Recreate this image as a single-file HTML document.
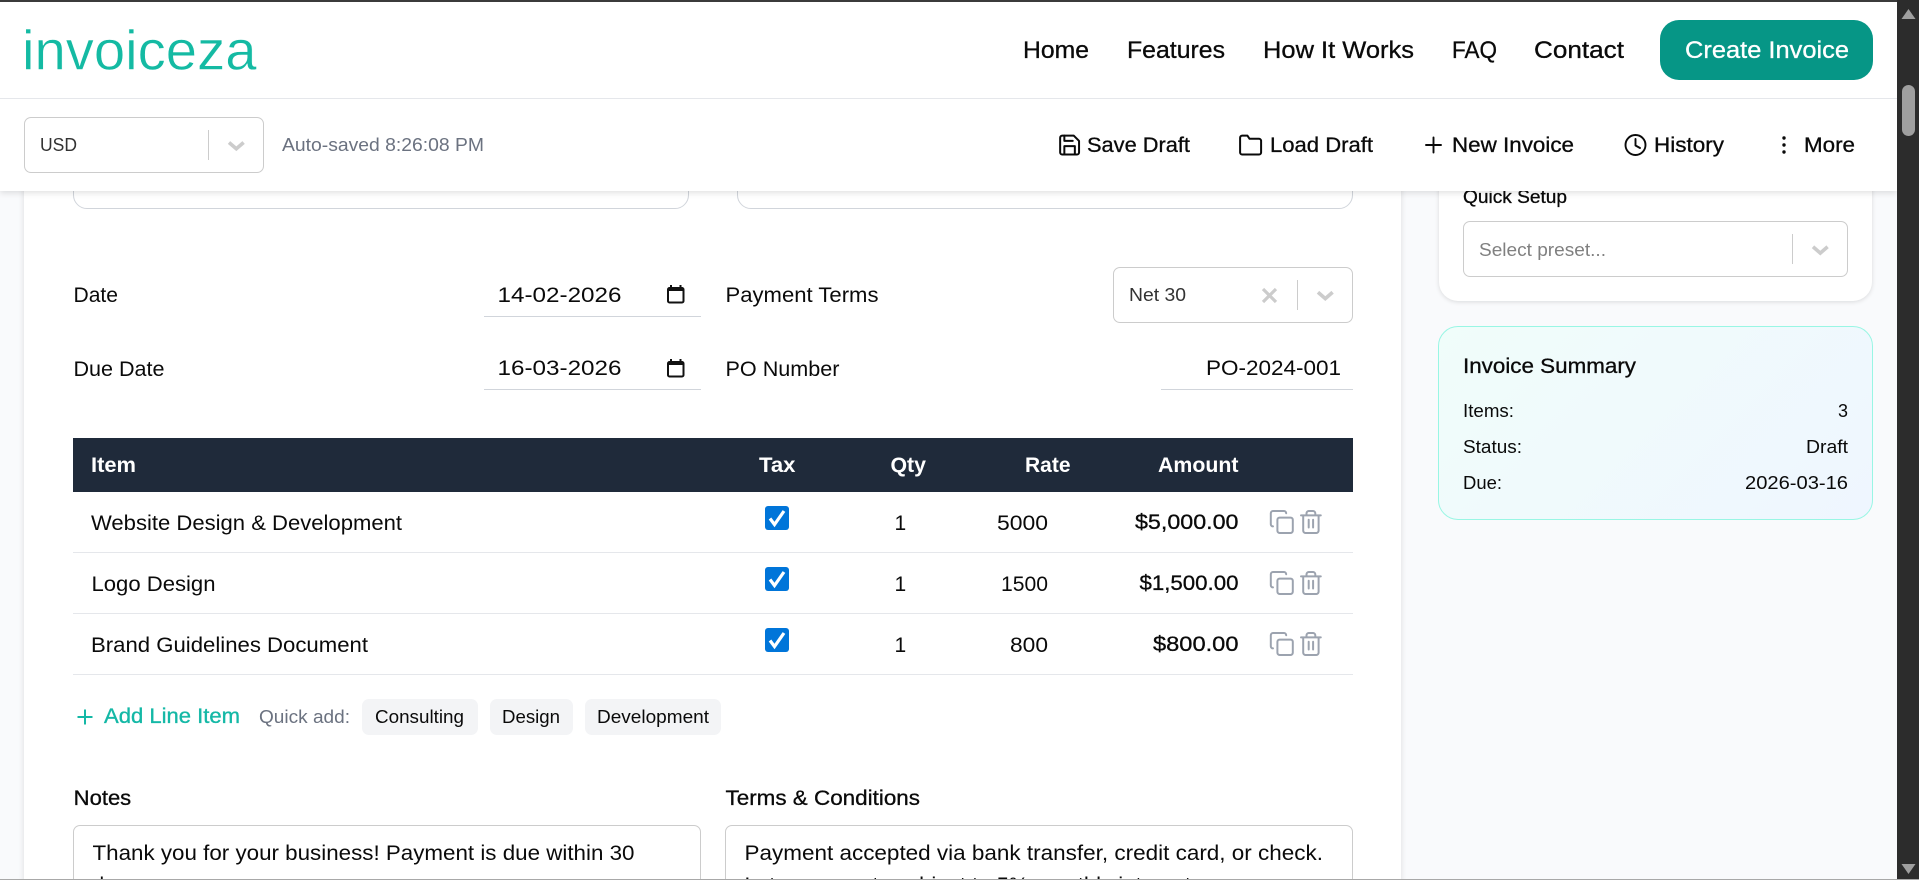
<!DOCTYPE html>
<html lang="en">
<head>
<meta charset="utf-8">
<title>invoiceza</title>
<style>
html,body{margin:0;padding:0;width:1919px;height:880px;overflow:hidden;background:#f9fafc}
body{position:relative;font-family:"Liberation Sans",sans-serif}
.a{position:absolute;box-sizing:border-box}
svg{position:absolute;left:0;top:0;overflow:visible}
text{font-family:"Liberation Sans",sans-serif;fill:#0a0a0a}
.l{font-size:21px}
.s{font-size:18.4px}
.m{stroke:#0a0a0a;stroke-width:.3px}
.b{font-weight:700}
.w{fill:#fff}
.sel{fill:#333}
.g{fill:#6b7280}
.ic{fill:none;stroke:#0a0a0a;stroke-width:1.9;stroke-linecap:round;stroke-linejoin:round}
.ca{fill:none;stroke:#ccc;stroke-width:3.600}
.act{fill:none;stroke:#9ca3af;stroke-width:1.8;stroke-linecap:round;stroke-linejoin:round}
.box{background:#fff;border:1px solid #ccc;border-radius:7px}
.inbox{background:#fff;border:1px solid #d1d5db}
</style>
</head>
<body>
<!-- content -->
<div class="a" style="left:24px;top:100px;width:1377px;height:800px;background:#fff;box-shadow:0 0 6px rgba(0,0,0,.12)"></div>
<div class="a inbox" style="left:73px;top:120px;width:616px;height:89px;border-radius:14px"></div>
<div class="a inbox" style="left:737px;top:120px;width:616px;height:89px;border-radius:14px"></div>
<div class="a box" style="left:1113px;top:267px;width:240px;height:56px"></div>
<div class="a" style="left:73px;top:438px;width:1280px;height:54px;background:#1f2a3a"></div>
<div class="a" style="left:73px;top:552px;width:1280px;height:1px;background:#e5e7eb"></div>
<div class="a" style="left:73px;top:613px;width:1280px;height:1px;background:#e5e7eb"></div>
<div class="a" style="left:73px;top:674px;width:1280px;height:1px;background:#e5e7eb"></div>
<div class="a" style="left:362px;top:699px;width:116px;height:36px;background:#f3f4f6;border-radius:7px"></div>
<div class="a" style="left:490px;top:699px;width:83px;height:36px;background:#f3f4f6;border-radius:7px"></div>
<div class="a" style="left:585px;top:699px;width:136px;height:36px;background:#f3f4f6;border-radius:7px"></div>
<div class="a inbox" style="left:73px;top:825px;width:628px;height:90px;border-color:#ccc;border-radius:7px"></div>
<div class="a inbox" style="left:725px;top:825px;width:628px;height:90px;border-color:#ccc;border-radius:7px"></div>
<!-- sidebar -->
<div class="a" style="left:1439px;top:100px;width:433px;height:201px;background:#fff;border-radius:19px;box-shadow:0 1px 5px rgba(0,0,0,.13)"></div>
<div class="a box" style="left:1463px;top:221px;width:385px;height:56px"></div>
<div class="a" style="left:1438px;top:326px;width:435px;height:194px;border-radius:20px;border:1px solid #99f6e4;background:linear-gradient(135deg,#f0fdfa,#eff6ff)"></div>

<svg width="1919" height="880" viewBox="0 0 1919 880">
  <!-- Quick setup -->
  <text class="s m" x="1463" y="203" textLength="104" lengthAdjust="spacingAndGlyphs">Quick Setup</text>
  <text class="s" style="fill:#808080" x="1479" y="256" textLength="127" lengthAdjust="spacingAndGlyphs">Select preset...</text>
  <rect x="1792" y="234" width="1" height="30" fill="#ccc"/>
  <path class="ca" d="M1813 246.800l7.300 6.300 7.300-6.300"/>
  <!-- Summary -->
  <text class="l m" x="1463" y="373" textLength="173" lengthAdjust="spacingAndGlyphs">Invoice Summary</text>
  <text class="s" x="1463" y="417" textLength="51" lengthAdjust="spacingAndGlyphs">Items:</text>
  <text class="s" x="1463" y="453" textLength="59" lengthAdjust="spacingAndGlyphs">Status:</text>
  <text class="s" x="1463" y="489" textLength="39" lengthAdjust="spacingAndGlyphs">Due:</text>
  <text class="s" x="1838" y="417" textLength="10" lengthAdjust="spacingAndGlyphs">3</text>
  <text class="s" x="1806" y="453" textLength="42" lengthAdjust="spacingAndGlyphs">Draft</text>
  <text class="s" x="1745" y="489" textLength="103" lengthAdjust="spacingAndGlyphs">2026-03-16</text>
  <!-- Form fields -->
  <text class="l" x="73.500" y="302" textLength="44.500" lengthAdjust="spacingAndGlyphs">Date</text>
  <text class="l" x="73.500" y="376" textLength="91" lengthAdjust="spacingAndGlyphs">Due Date</text>
  <text class="l" x="497.500" y="302" textLength="124" lengthAdjust="spacingAndGlyphs">14-02-2026</text>
  <text class="l" x="497.500" y="375" textLength="124" lengthAdjust="spacingAndGlyphs">16-03-2026</text>
  <rect x="484" y="316" width="217" height="1" fill="#d1d5db"/>
  <rect x="484" y="389" width="217" height="1" fill="#d1d5db"/>
  <g id="cal">
    <rect x="668" y="288" width="15.500" height="14.500" rx="1.500" fill="none" stroke="#111" stroke-width="2"/>
    <rect x="668" y="288" width="15.500" height="3" fill="#111"/>
    <rect x="670" y="285" width="2" height="3.500" fill="#111"/>
    <rect x="679.500" y="285" width="2" height="3.500" fill="#111"/>
  </g>
  <use href="#cal" y="74"/>
  <text class="l" x="725.500" y="302" textLength="153" lengthAdjust="spacingAndGlyphs">Payment Terms</text>
  <text class="l" x="725.500" y="376" textLength="114" lengthAdjust="spacingAndGlyphs">PO Number</text>
  <text class="s sel" x="1129" y="301" textLength="57" lengthAdjust="spacingAndGlyphs">Net 30</text>
  <path class="ca" style="stroke-width:3.200" d="M1263 289l13 13M1276 289l-13 13"/>
  <rect x="1297" y="280" width="1" height="30" fill="#ccc"/>
  <path class="ca" d="M1318 292.300l7.300 6.300 7.300-6.300"/>
  <text class="l" x="1206" y="375" textLength="135" lengthAdjust="spacingAndGlyphs">PO-2024-001</text>
  <rect x="1161" y="389" width="192" height="1" fill="#d1d5db"/>
  <!-- Table head -->
  <text class="l b w" x="91" y="472" textLength="45" lengthAdjust="spacingAndGlyphs">Item</text>
  <text class="l b w" x="759" y="472" textLength="36.500" lengthAdjust="spacingAndGlyphs">Tax</text>
  <text class="l b w" x="890.500" y="472" textLength="35.500" lengthAdjust="spacingAndGlyphs">Qty</text>
  <text class="l b w" x="1025" y="472" textLength="45.500" lengthAdjust="spacingAndGlyphs">Rate</text>
  <text class="l b w" x="1158" y="472" textLength="80.500" lengthAdjust="spacingAndGlyphs">Amount</text>
  <!-- Rows -->
  <text class="l" x="91" y="530" textLength="311" lengthAdjust="spacingAndGlyphs">Website Design &amp; Development</text>
  <text class="l" x="91.500" y="591" textLength="124" lengthAdjust="spacingAndGlyphs">Logo Design</text>
  <text class="l" x="91" y="652" textLength="277" lengthAdjust="spacingAndGlyphs">Brand Guidelines Document</text>
  <g id="chk">
    <rect x="765" y="506" width="24" height="24" rx="3" fill="#0075d9"/>
    <path d="M770 518.500l4.500 6 9.500-13.500" fill="none" stroke="#fff" stroke-width="3.200"/>
  </g>
  <use href="#chk" y="61"/>
  <use href="#chk" y="122"/>
  <text class="l" x="894.500" y="530">1</text>
  <text class="l" x="894.500" y="591">1</text>
  <text class="l" x="894.500" y="652">1</text>
  <text class="l" x="997" y="530" textLength="51" lengthAdjust="spacingAndGlyphs">5000</text>
  <text class="l" x="1001" y="591" textLength="47" lengthAdjust="spacingAndGlyphs">1500</text>
  <text class="l" x="1010" y="652" textLength="38" lengthAdjust="spacingAndGlyphs">800</text>
  <text class="l m" x="1135" y="529" textLength="103.500" lengthAdjust="spacingAndGlyphs">$5,000.00</text>
  <text class="l m" x="1139.500" y="590" textLength="99" lengthAdjust="spacingAndGlyphs">$1,500.00</text>
  <text class="l m" x="1153" y="651" textLength="85.500" lengthAdjust="spacingAndGlyphs">$800.00</text>
  <g id="acts">
    <g transform="translate(1268.600 508.800) scale(1.100)" class="act">
      <rect x="8" y="8" width="14" height="14" rx="2"/>
      <path d="M4 16c-1.100 0-2-.9-2-2V4c0-1.100.9-2 2-2h10c1.100 0 2 .9 2 2"/>
    </g>
    <g transform="translate(1297.700 508.800) scale(1.100)" class="act">
      <path d="M3 6h18M19 6v14c0 1-1 2-2 2H7c-1 0-2-1-2-2V6M8 6V4c0-1 1-2 2-2h4c1 0 2 1 2 2v2M10 10v7M14 10v7"/>
    </g>
  </g>
  <use href="#acts" y="61"/>
  <use href="#acts" y="122"/>
  <!-- Add line -->
  <path d="M85 709.500v15M77.500 717h15" stroke="#14b8a6" stroke-width="2" fill="none"/>
  <text class="l" style="fill:#14b8a6;stroke:#14b8a6;stroke-width:.35px" x="104" y="723" textLength="136" lengthAdjust="spacingAndGlyphs">Add Line Item</text>
  <text class="s g" x="259" y="723" textLength="91" lengthAdjust="spacingAndGlyphs">Quick add:</text>
  <text class="s" x="375" y="723" textLength="89" lengthAdjust="spacingAndGlyphs">Consulting</text>
  <text class="s" x="502" y="723" textLength="58" lengthAdjust="spacingAndGlyphs">Design</text>
  <text class="s" x="597" y="723" textLength="112" lengthAdjust="spacingAndGlyphs">Development</text>
  <!-- Notes -->
  <text class="l m" x="73.700" y="805" textLength="57.500" lengthAdjust="spacingAndGlyphs">Notes</text>
  <text class="l m" x="725.500" y="805" textLength="194.500" lengthAdjust="spacingAndGlyphs">Terms &amp; Conditions</text>
  <text class="l" x="92.500" y="860" textLength="542" lengthAdjust="spacingAndGlyphs">Thank you for your business! Payment is due within 30</text>
  <text class="l" x="92.500" y="892" textLength="50" lengthAdjust="spacingAndGlyphs">days.</text>
  <text class="l" x="744.500" y="860" textLength="578.500" lengthAdjust="spacingAndGlyphs">Payment accepted via bank transfer, credit card, or check.</text>
  <text class="l" x="744.500" y="892" textLength="452.500" lengthAdjust="spacingAndGlyphs">Late payments subject to 5% monthly interest.</text>
</svg>

<!-- sticky header -->
<div class="a" style="left:0;top:2px;width:1897px;height:189px;background:#fff;box-shadow:0 2px 6px rgba(0,0,0,.12)"></div>
<div class="a" style="left:0;top:98px;width:1897px;height:1px;background:#e5e7eb"></div>
<div class="a" style="left:1660px;top:20px;width:213px;height:60px;background:#069686;border-radius:19px"></div>
<div class="a box" style="left:24px;top:117px;width:239.500px;height:56px"></div>
<svg width="1919" height="880" viewBox="0 0 1919 880">
  <text style="font-size:56px;fill:#14baa3;stroke:#fff;stroke-width:.5px" x="22" y="69.500" textLength="234.500" lengthAdjust="spacingAndGlyphs">invoiceza</text>
  <g style="font-size:23.600px">
    <text class="m" x="1023" y="58" textLength="66" lengthAdjust="spacingAndGlyphs">Home</text>
    <text class="m" x="1127" y="58" textLength="98" lengthAdjust="spacingAndGlyphs">Features</text>
    <text class="m" x="1263" y="58" textLength="151" lengthAdjust="spacingAndGlyphs">How It Works</text>
    <text class="m" x="1452" y="58" textLength="45" lengthAdjust="spacingAndGlyphs">FAQ</text>
    <text class="m" x="1534" y="58" textLength="90" lengthAdjust="spacingAndGlyphs">Contact</text>
    <text class="w" style="stroke:#fff;stroke-width:.3px" x="1685" y="58" textLength="164" lengthAdjust="spacingAndGlyphs">Create Invoice</text>
  </g>
  <!-- toolbar left -->
  <text class="s sel" x="40" y="151" textLength="37" lengthAdjust="spacingAndGlyphs">USD</text>
  <rect x="208" y="130" width="1" height="30" fill="#ccc"/>
  <path class="ca" d="M229 142.500l7.300 6.300 7.300-6.300"/>
  <text class="s g" x="282" y="151" textLength="202" lengthAdjust="spacingAndGlyphs">Auto-saved 8:26:08 PM</text>
  <!-- toolbar right -->
  <g class="ic" transform="translate(1057 132.500) scale(1.050)">
    <path d="M19 21H5a2 2 0 0 1-2-2V5a2 2 0 0 1 2-2h11l5 5v11a2 2 0 0 1-2 2z"/>
    <path d="M17 21v-8H7v8M7 3v5h8"/>
  </g>
  <text class="l m" x="1087" y="152" textLength="103" lengthAdjust="spacingAndGlyphs">Save Draft</text>
  <g class="ic" transform="translate(1238 132.500) scale(1.050)">
    <path d="M22 19a2 2 0 0 1-2 2H4a2 2 0 0 1-2-2V5a2 2 0 0 1 2-2h5l2 3h9a2 2 0 0 1 2 2z"/>
  </g>
  <text class="l m" x="1270" y="152" textLength="103" lengthAdjust="spacingAndGlyphs">Load Draft</text>
  <path class="ic" d="M1433.500 137.500v15M1426 145h15"/>
  <text class="l m" x="1452" y="152" textLength="122" lengthAdjust="spacingAndGlyphs">New Invoice</text>
  <g class="ic">
    <circle cx="1635.500" cy="145" r="10"/>
    <path d="M1635.500 139v6.500l4.500 2.500"/>
  </g>
  <text class="l m" x="1654" y="152" textLength="70" lengthAdjust="spacingAndGlyphs">History</text>
  <circle cx="1784" cy="138" r="1.700" fill="#0a0a0a"/>
  <circle cx="1784" cy="145" r="1.700" fill="#0a0a0a"/>
  <circle cx="1784" cy="152" r="1.700" fill="#0a0a0a"/>
  <text class="l m" x="1804" y="152" textLength="51" lengthAdjust="spacingAndGlyphs">More</text>
</svg>

<!-- window chrome -->
<div class="a" style="left:0;top:0;width:1919px;height:2px;background:#3b3b3b"></div>
<div class="a" style="left:1897px;top:0;width:22px;height:880px;background:#2c2c2c"></div>
<div class="a" style="left:1902px;top:85px;width:13px;height:51px;background:#9f9f9f;border-radius:6.500px"></div>
<svg width="1919" height="880" viewBox="0 0 1919 880">
  <path d="M1908.500 9l7 10h-14z" fill="#9f9f9f"/>
  <path d="M1901.500 864h14l-7 10z" fill="#9f9f9f"/>
</svg>
<div class="a" style="left:0;top:879px;width:1919px;height:1px;background:#a8a8a8"></div>
</body>
</html>
